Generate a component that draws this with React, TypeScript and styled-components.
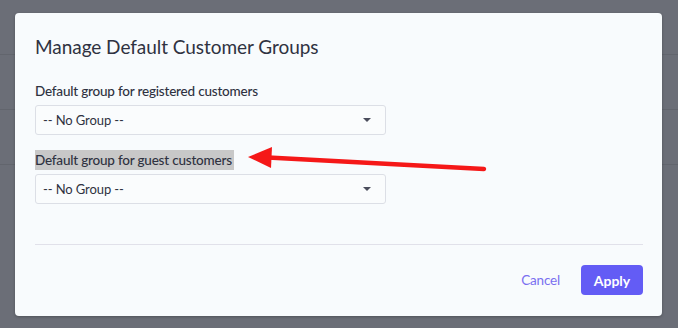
import React from "react";
import styled, { createGlobalStyle } from "styled-components";

const Global = createGlobalStyle`
  html, body { margin: 0; padding: 0; }
  body { background: #6b6e77; font-family: "Lato", "Open Sans", sans-serif; }
`;

const Page = styled.div`
  position: relative;
  width: 678px;
  height: 328px;
  overflow: hidden;
  background: #6b6e77;
`;

const BgRow = styled.div`
  height: 54px;
  border-bottom: 1px solid #62656d;
`;

const Modal = styled.div`
  position: absolute;
  left: 15px;
  top: 13px;
  width: 647px;
  height: 303px;
  box-sizing: border-box;
  background: #f8fbfd;
  border-radius: 4px;
  box-shadow: 0 1px 3px rgba(0, 0, 0, 0.25);
  padding: 22px 20px 0 20px;
  display: flex;
  flex-direction: column;
`;

const Title = styled.h2`
  margin: 0;
  font-size: 19px;
  font-weight: 400;
  color: #2f3241;
  line-height: 24px;
  letter-spacing: -0.05px;
`;

const Field = styled.div<{ $top: number }>`
  display: flex;
  flex-direction: column;
  align-items: flex-start;
  gap: 4px;
  margin-top: ${(p) => p.$top}px;
`;

const Label = styled.span<{ $highlight?: boolean }>`
  font-size: 13.5px;
  font-weight: 500;
  letter-spacing: -0.2px;
  color: #2f3241;
  line-height: 20px;
  background: ${(p) => (p.$highlight ? "#c8c8c8" : "transparent")};
  padding-right: ${(p) => (p.$highlight ? "2px" : "0")};
`;

const Select = styled.div`
  width: 351px;
  height: 30px;
  box-sizing: border-box;
  border: 1px solid #dcdfe6;
  border-radius: 3px;
  background: #fafcfd;
  display: flex;
  align-items: center;
  justify-content: space-between;
  padding: 0 14px 0 7px;
  font-size: 13px;
  letter-spacing: -0.1px;
  color: #2f3241;
`;

const Caret = styled.span`
  width: 0;
  height: 0;
  border-left: 4px solid transparent;
  border-right: 4px solid transparent;
  border-top: 4px solid #4a4d5c;
`;

const Divider = styled.hr`
  margin: 40px 0 0 0;
  border: none;
  border-top: 1px solid #e1e1ea;
  width: 608px;
`;

const Footer = styled.div`
  display: flex;
  justify-content: flex-end;
  align-items: center;
  gap: 21px;
  margin-top: 20px;
  width: 608px;
`;

const LinkButton = styled.button`
  background: none;
  border: none;
  padding: 0;
  font-family: inherit;
  font-size: 13.5px;
  letter-spacing: -0.2px;
  color: #7a6ff0;
  cursor: pointer;
`;

const Primary = styled.button`
  background: #635cf5;
  border: none;
  border-radius: 4px;
  width: 62px;
  height: 30px;
  color: #ffffff;
  font-family: inherit;
  font-weight: 700;
  font-size: 14px;
  cursor: pointer;
`;

const ArrowSvg = styled.svg`
  position: absolute;
  left: 0;
  top: 0;
  pointer-events: none;
`;

export default function App() {
  return (
    <>
      <Global />
      <Page>
        <BgRow />
        <BgRow />
        <BgRow />
        <Modal>
          <Title>Manage Default Customer Groups</Title>
          <Field $top={22}>
            <Label>Default group for registered customers</Label>
            <Select>
              <span>-- No Group --</span>
              <Caret />
            </Select>
          </Field>
          <Field $top={15}>
            <Label $highlight>Default group for guest customers</Label>
            <Select>
              <span>-- No Group --</span>
              <Caret />
            </Select>
          </Field>
          <Divider />
          <Footer>
            <LinkButton>Cancel</LinkButton>
            <Primary>Apply</Primary>
          </Footer>
        </Modal>
        <ArrowSvg width="678" height="328" viewBox="0 0 678 328">
          <line x1="484" y1="169" x2="268" y2="157.5" stroke="#f51818" strokeWidth="4.5" strokeLinecap="round" />
          <polygon points="248,157 272,147 271,168" fill="#f51818" />
        </ArrowSvg>
      </Page>
    </>
  );
}
